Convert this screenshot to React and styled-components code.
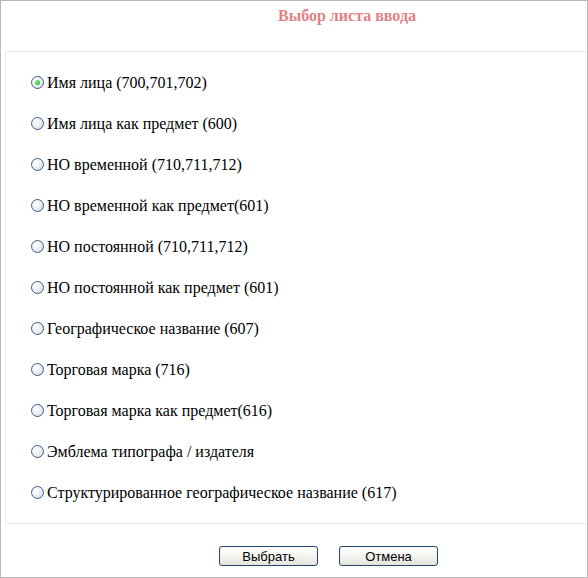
import React, { useState } from 'react';
import styled, { createGlobalStyle } from 'styled-components';

const GlobalStyle = createGlobalStyle`
  html, body {
    margin: 0;
    padding: 0;
    background: #ffffff;
  }
`;

const Frame = styled.div`
  box-sizing: border-box;
  width: 588px;
  height: 578px;
  border: 1px solid #b8b8b8;
  background: #ffffff;
  display: flex;
  flex-direction: column;
`;

const Title = styled.h1`
  margin: 0;
  height: 50px;
  padding: 6px 0 0 106px;
  box-sizing: border-box;
  text-align: center;
  font-family: 'Liberation Serif', 'Times New Roman', serif;
  font-size: 16px;
  font-weight: 700;
  color: #e08282;
`;

const Panel = styled.div`
  margin-left: 4px;
  border: 1px solid #ebebeb;
  border-right: none;
  padding: 10px 0 10px 0;
  display: flex;
  flex-direction: column;
`;

const Row = styled.label`
  height: 41px;
  display: flex;
  align-items: center;
  padding-left: 25px;
  font-family: 'Liberation Serif', 'Times New Roman', serif;
  font-size: 16px;
  color: #000000;
  cursor: pointer;
`;

const RadioInput = styled.input`
  appearance: none;
  margin: 0 3px 0 0;
  width: 13px;
  height: 13px;
  border-radius: 50%;
  border: 1px solid #3f5f88;
  box-sizing: border-box;
  background: radial-gradient(circle at 35% 35%, #ffffff 0%, #e8ecf2 55%, #c4ccd8 100%);
  position: relative;
  flex-shrink: 0;

  &:checked::after {
    content: '';
    position: absolute;
    left: 3px;
    top: 3px;
    width: 5px;
    height: 5px;
    border-radius: 50%;
    background: radial-gradient(circle at 40% 40%, #8ef08e 0%, #2fb52f 70%, #1c8f1c 100%);
  }
`;

const Footer = styled.div`
  display: flex;
  gap: 21px;
  padding: 22px 0 0 218px;
`;

const Button = styled.button`
  width: 99px;
  height: 20px;
  padding: 0;
  border: 1px solid #25446f;
  border-radius: 3px;
  background: linear-gradient(#ffffff 0%, #f4f4f0 50%, #e4e4dc 100%);
  font-family: 'Liberation Sans', Arial, sans-serif;
  font-size: 13px;
  color: #000000;
  cursor: pointer;
`;

const options = [
  'Имя лица (700,701,702)',
  'Имя лица как предмет (600)',
  'НО временной (710,711,712)',
  'НО временной как предмет(601)',
  'НО постоянной (710,711,712)',
  'НО постоянной как предмет (601)',
  'Географическое название (607)',
  'Торговая марка (716)',
  'Торговая марка как предмет(616)',
  'Эмблема типографа / издателя',
  'Структурированное географическое название (617)',
];

const App = () => {
  const [selected, setSelected] = useState(0);

  return (
    <>
      <GlobalStyle />
      <Frame>
        <Title>Выбор листа ввода</Title>
        <Panel>
          {options.map((text, i) => (
            <Row key={text}>
              <RadioInput
                type="radio"
                name="sheet"
                checked={selected === i}
                onChange={() => setSelected(i)}
              />
              {text}
            </Row>
          ))}
        </Panel>
        <Footer>
          <Button>Выбрать</Button>
          <Button>Отмена</Button>
        </Footer>
      </Frame>
    </>
  );
};

export default App;
